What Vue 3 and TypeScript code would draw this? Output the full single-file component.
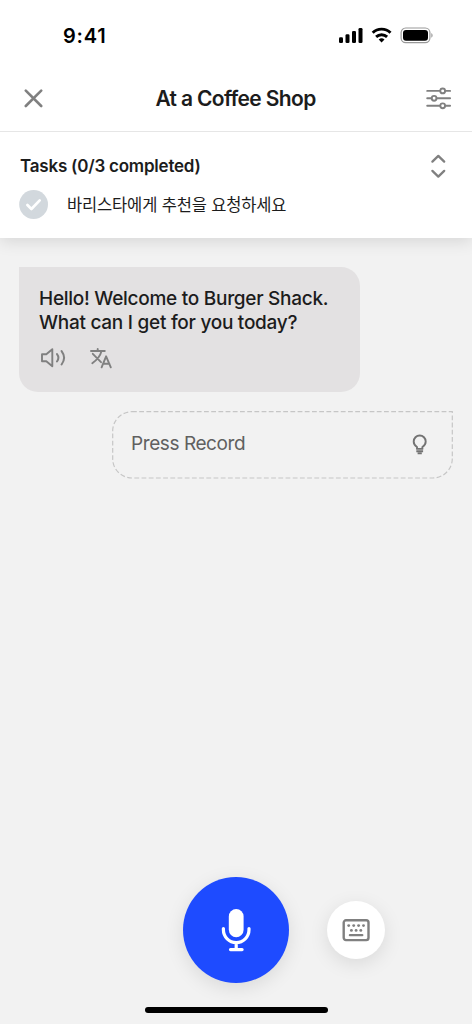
<script setup lang="ts">
import { ref } from 'vue'

interface Task {
  id: number
  label: string
}

const time = '9:41'
const title = 'At a Coffee Shop'
const completed = ref(0)
const total = 3
const tasks: Task[] = [{ id: 1, label: '바리스타에게 추천을 요청하세요' }]
const lines = ['Hello! Welcome to Burger Shack.', 'What can I get for you today?']
const topKeys = [6.7, 11.7, 16.6, 21.5]
const midKeys = [9.4, 14.1, 18.8]
</script>

<template>
  <div class="screen">
    <header class="top">
      <div class="status">
        <span class="time">{{ time }}</span>
        <svg class="signals" width="96" height="18" viewBox="0 0 96 18">
          <rect x="1" y="10.2" width="4" height="5.8" rx="1.3" />
          <rect x="7.5" y="7.3" width="4" height="8.7" rx="1.3" />
          <rect x="14" y="4" width="4" height="12" rx="1.3" />
          <rect x="20.5" y="1" width="4" height="15" rx="1.3" />
          <g class="waves">
            <path d="M34.7 5.8a12.7 12.7 0 0 1 17.8 0" />
            <path d="M38.1 9.9a8.1 8.1 0 0 1 11 0" />
          </g>
          <path d="M43.6 15.5l-2.9-2.9a4.3 4.3 0 0 1 5.8 0z" />
          <rect class="shell" x="63.1" y="1" width="28.8" height="14.6" rx="4.6" />
          <rect x="65" y="2.9" width="25" height="10.8" rx="3" />
          <path class="nub" d="M93.3 6v4.8c1.8-.8 1.8-4 0-4.8z" />
        </svg>
      </div>
      <nav class="nav">
        <svg class="gray" width="20" height="20" viewBox="0 0 20 20">
          <path d="M1.8 2.6l15.4 15.4M17.2 2.6L1.8 18" stroke-width="2.6" />
        </svg>
        <h1>{{ title }}</h1>
        <svg class="gray" width="26" height="24" viewBox="0 0 26 24">
          <g stroke-width="1.9">
            <path d="M1.2 4.9h12.8M19.2 4.9h4.9M1.2 12.3h4.3M10.7 12.3h13.4M1.2 19.8h12.8M19.2 19.8h4.9" />
            <circle cx="16.7" cy="4.9" r="2.4" />
            <circle cx="8.1" cy="12.3" r="2.4" />
            <circle cx="16.7" cy="19.8" r="2.4" />
          </g>
        </svg>
      </nav>
    </header>

    <section class="tasks">
      <div class="tasks-head">
        <h2>Tasks ({{ completed }}/{{ total }} completed)</h2>
        <svg class="gray" width="16" height="26" viewBox="0 0 16 26">
          <path d="M2.4 8.6L8.3 2.9l5.9 5.7M2.4 17.9l5.9 5.7 5.9-5.7" stroke-width="2.3" />
        </svg>
      </div>
      <div v-for="task in tasks" :key="task.id" class="task">
        <svg width="30" height="30" viewBox="0 0 30 30">
          <circle cx="14.6" cy="14.5" r="14.4" fill="#d2d8dd" />
          <path d="M8.4 15l4 4L20.7 10.4" fill="none" stroke="#fff" stroke-width="2.7" stroke-linecap="round" stroke-linejoin="round" />
        </svg>
        <span>{{ task.label }}</span>
      </div>
    </section>

    <main class="chat">
      <article class="bubble">
        <p v-for="line in lines" :key="line">{{ line }}</p>
        <div class="actions">
          <svg class="gray" width="28" height="22" viewBox="0 0 28 22">
            <path d="M3 7.2h4.3l6-5v17l-6-5H3z" stroke-width="1.9" />
            <path d="M18 7.1q2.8 3.7 0 7.4M22.6 4.1q5 6.7 0 13.4" stroke-width="2" />
          </svg>
          <svg class="gray" width="24" height="22" viewBox="0 0 24 22">
            <path d="M2 4h13.8M8.7 1.9V4M3.8 6.8L12 15.2M12.3 4.6C11.3 9 7.7 13 3.3 16.2M12.6 20.3l4.5-11L21.8 20.3M14.2 16.8h6.2" stroke-width="1.9" />
          </svg>
        </div>
      </article>

      <article class="reply">
        <svg class="outline" width="341" height="68" viewBox="0 0 341 68">
          <path d="M20 .7H340.3V47.5a19.5 19.5 0 0 1-19.5 19.5H20a19.3 19.3 0 0 1-19.3-19.3V20A19.3 19.3 0 0 1 20 .7z" />
        </svg>
        <span>Press Record</span>
        <svg class="bulb" width="16" height="22" viewBox="0 0 16 22">
          <path d="M5 14.9V13C3 11.8 1.7 9.9 1.7 7.5a6 6 0 0 1 12 0c0 2.4-1.3 4.3-3.3 5.5v1.9z" />
          <path d="M4.3 17.2h6.8M5.6 19.4h4.2" />
        </svg>
      </article>
    </main>

    <footer class="controls">
      <div class="buttons">
        <button class="record" aria-label="Record">
          <svg width="32" height="46" viewBox="0 0 32 46">
            <rect x="8.8" y="2" width="14.8" height="28.2" rx="7.4" fill="#fff" />
            <path d="M3.4 21.5v1.3a12.8 12.8 0 0 0 25.6 0v-1.3M16.2 35.5v7M10.5 42.6h11.6" fill="none" stroke="#fff" stroke-width="3.2" stroke-linecap="round" />
          </svg>
        </button>
        <button class="keyboard" aria-label="Keyboard">
          <svg class="gray" width="28" height="24" viewBox="0 0 28 24">
            <rect x="1.7" y="2.3" width="24.8" height="19.8" rx="2.3" stroke-width="2.4" />
            <g class="keys">
              <circle v-for="x in topKeys" :key="x" :cx="x" cy="7.6" r="1.45" />
              <circle v-for="x in midKeys" :key="x" :cx="x" cy="12.4" r="1.45" />
            </g>
            <path d="M7.9 17.2h12.4" stroke-width="2.3" />
          </svg>
        </button>
      </div>
      <div class="home"></div>
    </footer>
  </div>
</template>

<style>
body {
  margin: 0;
}
</style>

<style scoped>
.screen {
  width: 472px;
  height: 1024px;
  display: flex;
  flex-direction: column;
  overflow: hidden;
  background: #f2f2f2;
  color: #1c1c1c;
  font-family: Inter, "Noto Sans CJK KR", sans-serif;
}
svg {
  display: block;
  flex: none;
}
h1, h2, p {
  margin: 0;
  white-space: nowrap;
}
.gray {
  fill: none;
  stroke: #808080;
  stroke-linecap: round;
  stroke-linejoin: round;
}
.top {
  position: relative;
  z-index: 1;
  height: 131px;
  background: #fff;
  border-bottom: 1px solid #e6e6e6;
}
.status {
  height: 44px;
  padding: 26px 38px 0 63px;
  box-sizing: border-box;
  display: flex;
  justify-content: space-between;
}
.time {
  font-size: 20px;
  font-weight: 600;
  line-height: 20px;
  letter-spacing: 0.8px;
  color: #000;
}
.signals {
  margin-top: 1px;
}
.waves {
  fill: none;
  stroke: #000;
  stroke-width: 2.9;
}
.shell {
  fill: none;
  stroke: #999;
  stroke-width: 1.2;
}
.nub {
  fill: #999;
}
.nav {
  height: 60px;
  margin-top: 24px;
  padding: 0 20px 0 24px;
  display: grid;
  grid-template-columns: 26px 1fr 26px;
  align-items: center;
}
h1 {
  text-align: center;
  font-size: 21px;
  line-height: 26px;
  font-weight: 600;
  letter-spacing: -0.65px;
  padding: 1px 5px 0 0;
}
.tasks {
  height: 106px;
  padding: 21px 26px 0 19px;
  box-sizing: border-box;
  background: #fff;
  box-shadow: 0 3px 16px rgba(0, 0, 0, 0.12);
}
.tasks-head {
  height: 26px;
  display: flex;
  align-items: center;
  justify-content: space-between;
}
h2 {
  font-size: 17px;
  font-weight: 600;
  letter-spacing: -0.22px;
  padding-left: 1px;
}
.task {
  margin-top: 11px;
  display: flex;
  align-items: center;
  gap: 18px;
  font-size: 16.5px;
  letter-spacing: -0.15px;
  line-height: 30px;
}
.task span {
  margin-top: -1px;
}
.chat {
  flex: 1;
  padding: 29px 19px 0;
}
.bubble {
  width: 341px;
  height: 125px;
  box-sizing: border-box;
  padding: 20px 20px 0;
  border-radius: 0 19px 19px 19px;
  background: #e3e1e2;
}
.bubble p {
  position: relative;
  font-size: 19px;
  font-weight: 500;
  line-height: 24px;
  letter-spacing: -0.27px;
}
.actions {
  display: flex;
  gap: 22px;
  margin-top: 12px;
}
.reply {
  position: relative;
  width: 341px;
  height: 68px;
  margin: 19px 0 0 auto;
  padding: 0 25px 0 19px;
  box-sizing: border-box;
  display: flex;
  align-items: center;
  justify-content: space-between;
  font-size: 19px;
  letter-spacing: -0.42px;
  color: #606060;
}
.reply span {
  padding-bottom: 3px;
}
.outline {
  position: absolute;
  inset: 0;
  fill: none;
  stroke: #c6c6c6;
  stroke-width: 1.2;
  stroke-dasharray: 4.8 2.4;
}
.bulb {
  fill: none;
  stroke: #737373;
  stroke-width: 1.9;
  stroke-linejoin: round;
}
.controls {
  height: 147px;
  display: flex;
  flex-direction: column;
  align-items: center;
}
.buttons {
  width: 100%;
  display: grid;
  grid-template-columns: 183px 106px 38px 58px 1fr;
  align-items: center;
}
button {
  border: 0;
  padding: 0;
  border-radius: 50%;
  display: grid;
  place-items: center;
}
.record {
  grid-column: 2;
  width: 106px;
  height: 106px;
  background: #1e4bff;
  box-shadow: 0 5px 19px rgba(0, 0, 0, 0.1);
}
.keyboard {
  grid-column: 4;
  width: 58px;
  height: 58px;
  background: #fff;
  box-shadow: 0 5px 19px rgba(0, 0, 0, 0.1);
}
.keys {
  fill: #808080;
  stroke: none;
}
.home {
  width: 183px;
  height: 6px;
  margin-top: 24px;
  border-radius: 3px;
  background: #000;
}
</style>
